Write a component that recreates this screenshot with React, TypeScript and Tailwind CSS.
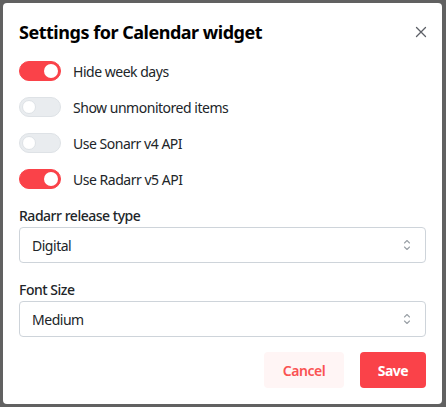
import React, { useState } from "react";

function Toggle({ on }: { on: boolean }) {
  return (
    <div
      className={
        on
          ? "relative w-[42px] h-[20px] rounded-full bg-[#fa4249] border border-[#fa4249] shrink-0"
          : "relative w-[42px] h-[20px] rounded-full bg-[#e9ecef] border border-[#dee2e6] shrink-0"
      }
    >
      <div
        className={
          on
            ? "absolute top-[2px] right-[2px] w-[14px] h-[14px] rounded-full bg-white"
            : "absolute top-[2px] left-[2px] w-[14px] h-[14px] rounded-full bg-white border border-[#dee2e6]"
        }
      />
    </div>
  );
}

function Selector() {
  return (
    <svg width="12" height="16" viewBox="0 0 12 16" fill="none" stroke="#9aa0a6" strokeWidth="1.1" strokeLinecap="round" strokeLinejoin="round">
      <path d="M3.5 6 L6 3.5 L8.5 6" />
      <path d="M3.5 10 L6 12.5 L8.5 10" />
    </svg>
  );
}

function SelectField({ label, value }: { label: string; value: string }) {
  return (
    <div className="flex flex-col">
      <div className="text-[14px] leading-[21px] font-medium text-[#212529] mb-[1px]">{label}</div>
      <div className="h-[36px] rounded-[4px] border border-[#ced4da] flex items-center justify-between pl-[12px] pr-[12px]">
        <span className="text-[14px] text-[#212529]">{value}</span>
        <Selector />
      </div>
    </div>
  );
}

export default function App() {
  const [toggles] = useState([
    { label: "Hide week days", on: true },
    { label: "Show unmonitored items", on: false },
    { label: "Use Sonarr v4 API", on: false },
    { label: "Use Radarr v5 API", on: true },
  ]);
  return (
    <div
      className="w-[446px] h-[407px] bg-[#616161] pt-[3px] pb-[3px] pl-[3px] pr-[4px] tracking-[-0.03em]"
      style={{ fontFamily: '"Noto Sans", "Open Sans", sans-serif' }}
    >
      <div className="bg-white rounded-[4px] h-full px-[16px] pt-[15px] pb-[16px] flex flex-col">
        <div className="flex items-center justify-between h-[28px]">
          <div className="text-[18px] font-bold text-black leading-[28px]">Settings for Calendar widget</div>
          <svg width="12" height="12" viewBox="0 0 12 12" stroke="#5c5f66" strokeWidth="1.3" strokeLinecap="round" className="mr-[-1px]">
            <path d="M1.5 1.5 L10.5 10.5 M10.5 1.5 L1.5 10.5" />
          </svg>
        </div>
        <div className="flex flex-col gap-[16px] mt-[15px]">
          {toggles.map((t) => (
            <div key={t.label} className="flex items-center gap-[12px] h-[20px]">
              <Toggle on={t.on} />
              <span className="text-[14px] text-[#212529]">{t.label}</span>
            </div>
          ))}
        </div>
        <div className="mt-[16px] flex flex-col gap-[16px]">
          <SelectField label="Radarr release type" value="Digital" />
          <SelectField label="Font Size" value="Medium" />
        </div>
        <div className="mt-auto flex justify-end gap-[16px]">
          <button className="h-[36px] w-[80px] rounded-[4px] bg-[#fff5f5] text-[#fa5252] text-[14px] font-semibold">Cancel</button>
          <button className="h-[36px] w-[66px] rounded-[4px] bg-[#fa4249] text-white text-[14px] font-bold">Save</button>
        </div>
      </div>
    </div>
  );
}
